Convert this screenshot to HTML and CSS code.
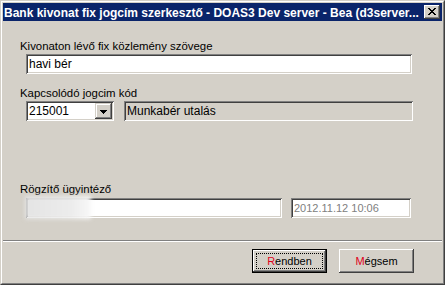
FILE: index.html
```html
<!DOCTYPE html>
<html lang="hu">
<head>
  <meta charset="UTF-8">
  <title>Bank kivonat fix jogcím szerkesztő</title>
  <link rel="stylesheet" href="styles.css">
</head>
<body>
  <div class="window">
    <div class="frame">
      <div class="titlebar">
        <span class="title">Bank kivonat fix jogcím szerkesztő - DOAS3 Dev server - Bea (d3server...</span>
        <span class="close">
          <svg width="8" height="7" viewBox="0 0 8 7" shape-rendering="crispEdges">
            <rect x="0" y="0" width="2" height="1"/><rect x="6" y="0" width="2" height="1"/>
            <rect x="1" y="1" width="2" height="1"/><rect x="5" y="1" width="2" height="1"/>
            <rect x="2" y="2" width="4" height="1"/>
            <rect x="3" y="3" width="2" height="1"/>
            <rect x="2" y="4" width="4" height="1"/>
            <rect x="1" y="5" width="2" height="1"/><rect x="5" y="5" width="2" height="1"/>
            <rect x="0" y="6" width="2" height="1"/><rect x="6" y="6" width="2" height="1"/>
          </svg>
        </span>
      </div>

      <div class="panel">
        <div class="lbl">Kivonaton lévő fix közlemény szövege</div>
        <div class="field field-wide">havi bér</div>

        <div class="lbl lbl-2">Kapcsolódó jogcim kód</div>
        <div class="row row-2">
          <div class="field combo">
            <span class="combo-text">215001</span>
            <span class="drop">
              <svg width="7" height="4" viewBox="0 0 7 4" shape-rendering="crispEdges">
                <rect x="0" y="0" width="7" height="1"/>
                <rect x="1" y="1" width="5" height="1"/>
                <rect x="2" y="2" width="3" height="1"/>
                <rect x="3" y="3" width="1" height="1"/>
              </svg>
            </span>
          </div>
          <div class="field readonly">Munkabér utalás</div>
        </div>

        <div class="lbl lbl-3">Rögzítő ügyintéző</div>
        <div class="row row-3">
          <div class="field name"><span class="blur"></span></div>
          <div class="field date">2012.11.12 10:06</div>
        </div>
      </div>

      <div class="buttons">
        <button class="btn btn-default"><span class="focus"><span class="mn">R</span>endben</span></button>
        <button class="btn"><span class="plain"><span class="mn">M</span>égsem</span></button>
      </div>
    </div>
  </div>
</body>
</html>
```

FILE: styles.css
```css
body {
  margin: 0;
  background-color: #d4d0c8;
  font-family: "Liberation Sans", Arial, sans-serif;
  font-size: 11px;
  color: #000;
}

.window {
  width: 445px;
  height: 285px;
  box-sizing: border-box;
  border: 1px solid;
  border-color: #d4d0c8 #404040 #404040 #d4d0c8;
  background-color: #d4d0c8;
}

.frame {
  height: 100%;
  box-sizing: border-box;
  border: 1px solid;
  border-color: #fff #808080 #808080 #fff;
  padding: 1px;
  display: flex;
  flex-direction: column;
}

.titlebar {
  height: 18px;
  flex: none;
  background-color: #0a246a;
  color: #fff;
  display: flex;
  align-items: center;
  padding: 0 2px 0 1px;
}

.title {
  flex: 1;
  font-weight: bold;
  font-size: 12px;
  line-height: 18px;
  padding-top: 1px;
  white-space: nowrap;
  overflow: hidden;
}

.close {
  width: 16px;
  height: 14px;
  box-sizing: border-box;
  background-color: #d4d0c8;
  display: flex;
  align-items: center;
  justify-content: center;
  padding: 0 1px 1px 0;
  box-shadow: inset -1px -1px #404040, inset 1px 1px #fff, inset -2px -2px #808080, inset 2px 2px #d4d0c8;
}

.close svg,
.drop svg {
  fill: #000;
  display: block;
}

.panel {
  flex: none;
  height: 219px;
  box-sizing: border-box;
  margin-top: 1px;
  border-bottom: 1px solid #808080;
  padding: 18px 0 0 17px;
}

.lbl {
  line-height: 13px;
  height: 13px;
  font-size: 11.4px;
}

.lbl-2 {
  margin-top: 13px;
}

.lbl-3 {
  margin-top: 62px;
}

.field {
  height: 20px;
  box-sizing: border-box;
  padding: 2px 2px 2px 3px;
  line-height: 16px;
  font-size: 12px;
  background-color: #fff;
  white-space: nowrap;
  box-shadow: inset 1px 1px #808080, inset -1px -1px #fff, inset 2px 2px #404040, inset -2px -2px #d4d0c8;
}

.field-wide {
  margin: 1px 0 0 6px;
  width: 386px;
}

.row {
  display: flex;
  margin-left: 6px;
}

.row-2 {
  margin-top: 1px;
  gap: 10px;
}

.row-3 {
  margin-top: 2px;
  gap: 9px;
}

.combo {
  width: 88px;
  display: flex;
  padding-right: 2px;
}

.combo-text {
  flex: 1;
}

.drop {
  width: 17px;
  height: 16px;
  box-sizing: border-box;
  background-color: #d4d0c8;
  display: flex;
  align-items: center;
  justify-content: center;
  padding-top: 1px;
  box-shadow: inset -1px -1px #404040, inset 1px 1px #d4d0c8, inset -2px -2px #808080, inset 2px 2px #fff;
}

.readonly {
  width: 289px;
  background-color: #d4d0c8;
}

.name {
  width: 256px;
  position: relative;
}

.blur {
  position: absolute;
  left: -1px;
  top: -2px;
  width: 66px;
  height: 23px;
  background: linear-gradient(90deg, #e4e4e4, #ececec 70%, #f8f8f8);
  filter: blur(2px);
}

.date {
  width: 120px;
  font-size: 11px;
  color: #808080;
}

.buttons {
  flex: 1;
  border-top: 1px solid #fff;
  display: flex;
  justify-content: flex-end;
  align-items: flex-start;
  gap: 12px;
  padding: 7px 28px 0 0;
}

.btn {
  width: 75px;
  height: 24px;
  box-sizing: border-box;
  margin: 0;
  padding: 3px;
  border: none;
  background-color: #d4d0c8;
  font-family: "Liberation Sans", Arial, sans-serif;
  font-size: 11px;
  color: #000;
  display: flex;
  box-shadow: inset -1px -1px #404040, inset 1px 1px #fff, inset -2px -2px #808080, inset 2px 2px #d4d0c8;
}

.btn-default {
  padding: 4px;
  box-shadow: inset 0 0 0 1px #000, inset -2px -2px #404040, inset 2px 2px #fff, inset -3px -3px #808080, inset 3px 3px #d4d0c8;
}

.focus,
.plain {
  flex: 1;
  display: flex;
  align-items: center;
  justify-content: center;
}

.focus {
  border: 1px dotted #000;
}

.mn {
  color: #e0001b;
}
```
